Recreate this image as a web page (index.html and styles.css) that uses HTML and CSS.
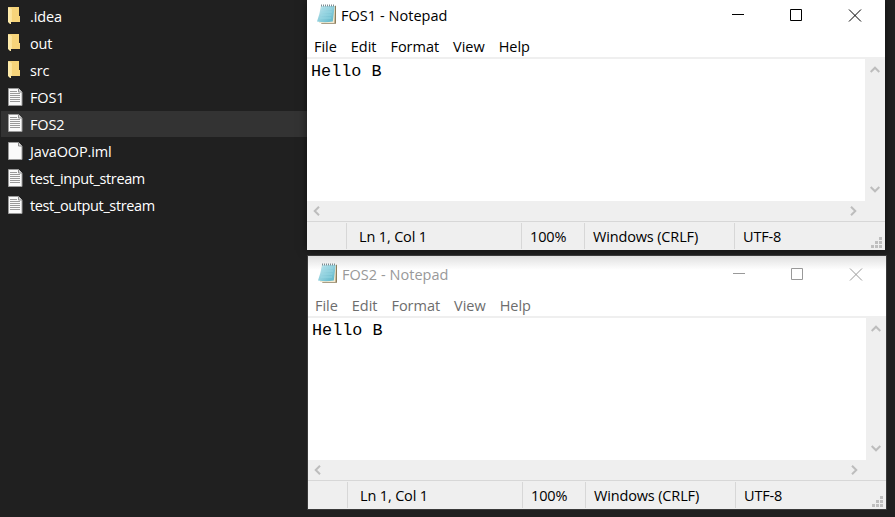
FILE: index.html
```html
<!DOCTYPE html>
<html lang="en">
<head>
<meta charset="utf-8">
<title>Desktop</title>
<link rel="stylesheet" href="styles.css">
</head>
<body>
<svg width="0" height="0" class="defs">
  <defs>
    <linearGradient id="fold" x1="0" x2="1"><stop offset="0" stop-color="#ffeeb0"/><stop offset="1" stop-color="#fbe298"/></linearGradient>
    <linearGradient id="pad" x1="0" y1="0" x2="1" y2="1"><stop offset="0" stop-color="#c5e9f0"/><stop offset="1" stop-color="#58b4c8"/></linearGradient>
    <symbol id="folder" viewBox="0 0 16 18">
      <path d="M0 0H11V9H12V15H2V3z" fill="#f6d47a"/>
      <path d="M0 0L4 2V15H3V17H2L0 15z" fill="url(#fold)"/>
    </symbol>
    <symbol id="page" viewBox="0 0 16 18">
      <path d="M.5 .5H10.5L14 4V17.5H.5z" fill="#fafafa" stroke="#9a9a9a"/>
      <path d="M10.5 .5V4H14" fill="#ddd" stroke="#8c8c8c"/>
    </symbol>
    <symbol id="text" viewBox="0 0 16 18">
      <use href="#page" width="16" height="18"/>
      <path d="M2 3.5H9M2 5.5H12M2 7.5H12M2 9.5H12M2 11.5H12M2 13.5H12" stroke="#999" fill="none"/>
    </symbol>
    <symbol id="notepad" viewBox="0 0 20 21">
      <path d="M17 2.5L19 1.5V19.8H4z" fill="#8d7d5b"/>
      <path d="M4 2H18L17.5 19H2z" fill="#f3ead0"/>
      <path d="M4 2H17.7L15.8 17.5Q8 19 0 17.5Q2.5 11 4 2z" fill="url(#pad)"/>
      <path d="M5 5H15M4.5 8H15M4 11H14.5M3 14H14" stroke="#9bdbe6" stroke-width=".7"/>
      <path d="M4 1.5H17.5" stroke="#7d8d93" stroke-width="2" stroke-dasharray="1 1"/>
    </symbol>
  </defs>
</svg>

<ul class="files">
  <li><svg><use href="#folder"/></svg><span>.idea</span></li>
  <li><svg><use href="#folder"/></svg><span>out</span></li>
  <li><svg><use href="#folder"/></svg><span>src</span></li>
  <li><svg><use href="#text"/></svg><span>FOS1</span></li>
  <li class="selected"><svg><use href="#text"/></svg><span>FOS2</span></li>
  <li><svg><use href="#page"/></svg><span>JavaOOP.iml</span></li>
  <li><svg><use href="#text"/></svg><span class="long">test_input_stream</span></li>
  <li><svg><use href="#text"/></svg><span class="long">test_output_stream</span></li>
</ul>

<section class="window first">
  <header class="title">
    <svg class="app"><use href="#notepad"/></svg><h1>FOS1 - Notepad</h1>
    <svg class="controls" viewBox="0 0 130 13"><path d="M0 5.5H12M58.5 .5H69.5V11.5H58.5zM117 .5L129 12.5M129 .5L117 12.5"/></svg>
  </header>
  <nav class="menu"><span>File</span><span>Edit</span><span>Format</span><span>View</span><span>Help</span></nav>
  <div class="editor">
    <pre>Hello B</pre>
    <div class="vbar"><svg viewBox="0 0 10 7"><path d="M.7 6L5 1.7L9.3 6"/></svg><svg viewBox="0 0 10 7"><path d="M.7 1L5 5.3L9.3 1"/></svg></div>
  </div>
  <div class="hbar"><svg viewBox="0 0 7 10"><path d="M6 .7L1.7 5L6 9.3"/></svg><svg viewBox="0 0 7 10"><path d="M1 .7L5.3 5L1 9.3"/></svg></div>
  <footer class="status"><i></i><span>Ln 1, Col 1</span><span>100%</span><span>Windows (CRLF)</span><span>UTF-8</span>
    <svg class="grip" viewBox="0 0 11 11"><path d="M8 0h3v3h-3zM4 4h3v3h-3zM8 4h3v3h-3zM0 8h3v3h-3zM4 8h3v3h-3zM8 8h3v3h-3z"/></svg></footer>
</section>

<section class="window second">
  <header class="title">
    <svg class="app"><use href="#notepad"/></svg><h1>FOS2 - Notepad</h1>
    <svg class="controls" viewBox="0 0 130 13"><path d="M0 5.5H12M58.5 .5H69.5V11.5H58.5zM117 .5L129 12.5M129 .5L117 12.5"/></svg>
  </header>
  <nav class="menu"><span>File</span><span>Edit</span><span>Format</span><span>View</span><span>Help</span></nav>
  <div class="editor">
    <pre>Hello B</pre>
    <div class="vbar"><svg viewBox="0 0 10 7"><path d="M.7 6L5 1.7L9.3 6"/></svg><svg viewBox="0 0 10 7"><path d="M.7 1L5 5.3L9.3 1"/></svg></div>
  </div>
  <div class="hbar"><svg viewBox="0 0 7 10"><path d="M6 .7L1.7 5L6 9.3"/></svg><svg viewBox="0 0 7 10"><path d="M1 .7L5.3 5L1 9.3"/></svg></div>
  <footer class="status"><i></i><span>Ln 1, Col 1</span><span>100%</span><span>Windows (CRLF)</span><span>UTF-8</span>
    <svg class="grip" viewBox="0 0 11 11"><path d="M8 0h3v3h-3zM4 4h3v3h-3zM8 4h3v3h-3zM0 8h3v3h-3zM4 8h3v3h-3zM8 8h3v3h-3z"/></svg></footer>
</section>
</body>
</html>
```
FILE: styles.css
```css
* { box-sizing: border-box; }
body {
  margin: 0;
  height: 517px;
  overflow: hidden;
  background: #202020;
  font: 14.5px/20px "Open Sans", sans-serif;
  letter-spacing: -0.15px;
  white-space: nowrap;
}
.defs { position: absolute; }
svg { display: block; flex: none; }
.files { list-style: none; margin: 0; padding: 3px 0 0 1px; width: 307px; color: #fff; }
.files li { display: flex; height: 27px; padding: 4px 0 0 7px; gap: 6px; }
.files li.selected { background: #333; height: 26px; margin-bottom: 1px; }
.files svg { width: 16px; height: 18px; }
.files .selected svg { margin-top: -1px; }
.files .long { letter-spacing: -0.37px; }

.window {
  position: absolute;
  width: 578px;
  display: flex;
  flex-direction: column;
  background: #fff;
  color: #000;
}
.first { left: 307px; top: 0; height: 250px; box-shadow: 0 0 9px #0008; }
.second {
  left: 308px;
  top: 256px;
  height: 253px;
  background: linear-gradient(#e0e0e0, #fff 14px);
  outline: 1px solid #3a3a3a;
}
.title { display: flex; height: 31px; padding-left: 10px; flex: none; }
.second .title { height: 34px; padding-top: 3px; color: #999; }
.app { width: 20px; height: 21px; margin-top: 4px; }
.title h1 { margin: 6px 0 0 4px; font: inherit; letter-spacing: 0.04px; }
.controls { width: 130px; height: 13px; margin: 9px 23px 0 auto; fill: none; stroke: #000; }
.second .controls { stroke: #999; }
.menu { display: flex; flex: none; height: 28px; padding: 6px 7px 0; gap: 14px; border-bottom: 2px solid #efefef; letter-spacing: -0.03px; }
.second .menu { color: #6d6d6d; }
.editor { display: flex; height: 142px; flex: none; background: #fff; }
.editor pre { flex: 1; margin: 0; padding: 3px 0 0 4px; font: 16.8px/20px "Liberation Mono", monospace; letter-spacing: 0; }
.vbar { width: 20px; background: #efefef; display: flex; flex-direction: column; justify-content: space-between; align-items: center; padding: 7px 0 8px; }
.vbar svg { width: 10px; height: 7px; }
.hbar { height: 20px; flex: none; background: #efefef; display: flex; justify-content: space-between; align-items: center; padding: 0 28px 0 6px; }
.hbar svg { width: 7px; height: 10px; }
.vbar svg, .hbar svg { fill: none; stroke: #bdbdbd; stroke-width: 2; }
.status {
  display: grid;
  grid-template-columns: 39px 175px 63px 150px 1fr 14px;
  height: 29px;
  flex: none;
  padding-top: 1px;
  background: #efefef;
  border-top: 1px solid #d7d7d7;
}
.status span { height: 26px; border-left: 1px solid #d7d7d7; padding: 4px 0 0 8px; }
.status i + span { padding-left: 12px; }
.grip { width: 11px; height: 11px; fill: #bfbfbf; margin-top: 14px; }
```
